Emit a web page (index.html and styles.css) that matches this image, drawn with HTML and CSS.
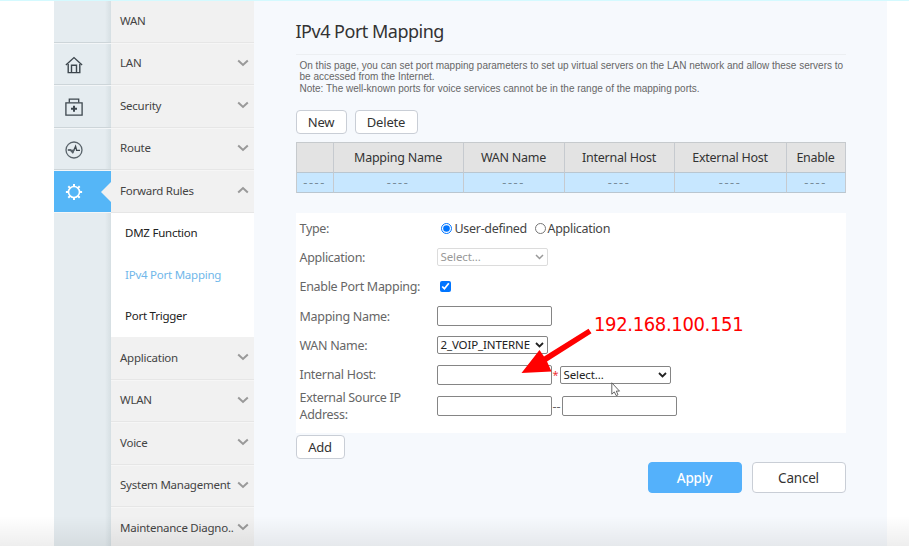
FILE: index.html
```html
<!DOCTYPE html>
<html lang="en">
<head>
<meta charset="utf-8">
<title>IPv4 Port Mapping</title>
<link rel="stylesheet" href="styles.css">
</head>
<body>
<svg class="defs" width="0" height="0"><symbol id="chev" viewBox="0 0 12 8"><path d="M1.2 1.5 6 6 10.8 1.5" fill="none" stroke="currentColor" stroke-width="2"/></symbol></svg>
<div class="page">
  <nav class="rail">
    <div class="rail-item"></div>
    <div class="rail-item"><svg width="18" height="18" viewBox="0 0 18 18" fill="none" stroke="#3d464d" stroke-width="1.4"><path d="M.9 9 9 1.6 17.1 9"/><path d="M3.2 8V16.6H14.8V8M6.5 16.5V9.2H11.5V16.5"/></svg></div>
    <div class="rail-item"><svg width="18" height="18" viewBox="0 0 18 18" fill="none" stroke="#3d464d" stroke-width="1.3"><path d="M.9 4.8H17.1V17.1H.9Z"/><path d="M4.3 4.6V1.2H13.7V4.6"/><path d="M9 7.8V13.8M6 10.8H12" stroke-width="2"/></svg></div>
    <div class="rail-item"><svg width="18" height="18" viewBox="0 0 18 18" fill="none" stroke="#59636a" stroke-width="1.3"><circle cx="9" cy="9" r="8"/><path d="M2.8 9H5.5L7.8 11.6 10.6 5.3 11.6 9.3H15" stroke="#3d464d"/><path d="M5.5 9.2 7.7 11.5 8.8 9.3Z" fill="#3d464d"/></svg></div>
    <div class="rail-item active"><svg width="18" height="18" viewBox="0 0 18 18" fill="none" stroke="#fff"><circle cx="9" cy="9" r="5.5" stroke-width="1.6"/><path d="M9 3.2V.9M9 14.8V17.1M3.2 9H.9M14.8 9H17.1M4.9 4.9 3.3 3.3M13.1 4.9 14.7 3.3M4.9 13.1 3.3 14.7M13.1 13.1 14.7 14.7" stroke-width="2"/></svg></div>
  </nav>
  <nav class="menu">
    <div class="menu-item">WAN</div>
    <div class="menu-item">LAN<svg class="chev"><use href="#chev"/></svg></div>
    <div class="menu-item">Security<svg class="chev"><use href="#chev"/></svg></div>
    <div class="menu-item">Route<svg class="chev"><use href="#chev"/></svg></div>
    <div class="menu-item">Forward Rules<svg class="chev up"><use href="#chev"/></svg></div>
    <div class="submenu">
      <div class="sub-item">DMZ Function</div>
      <div class="sub-item current">IPv4 Port Mapping</div>
      <div class="sub-item">Port Trigger</div>
    </div>
    <div class="menu-item">Application<svg class="chev"><use href="#chev"/></svg></div>
    <div class="menu-item">WLAN<svg class="chev"><use href="#chev"/></svg></div>
    <div class="menu-item">Voice<svg class="chev"><use href="#chev"/></svg></div>
    <div class="menu-item">System Management<svg class="chev"><use href="#chev"/></svg></div>
    <div class="menu-item">Maintenance Diagno..<svg class="chev"><use href="#chev"/></svg></div>
  </nav>
  <main class="content">
    <h1>IPv4 Port Mapping</h1>
    <div class="intro">On this page, you can set port mapping parameters to set up virtual servers on the LAN network and allow these servers to<br>be accessed from the Internet.<br>Note: The well-known ports for voice services cannot be in the range of the mapping ports.</div>
    <div class="tools"><button class="btn new">New</button><button class="btn delete">Delete</button></div>
    <div class="table">
      <div class="th"></div><div class="th">Mapping Name</div><div class="th">WAN Name</div><div class="th">Internal Host</div><div class="th">External Host</div><div class="th">Enable</div>
      <div class="td">----</div><div class="td">----</div><div class="td">----</div><div class="td">----</div><div class="td">----</div><div class="td">----</div>
    </div>
    <form class="form">
      <div class="row"><span class="label">Type:</span><input type="radio" name="t" checked><span class="opt first">User-defined</span><input type="radio" name="t"><span class="opt">Application</span></div>
      <div class="row"><span class="label">Application:</span><span class="select disabled">Select...<svg width="9" height="6" viewBox="0 0 9 6"><path d="M1 1 4.5 4.5 8 1" fill="none" stroke="currentColor" stroke-width="1.5"/></svg></span></div>
      <div class="row"><span class="label">Enable Port Mapping:</span><input type="checkbox" checked></div>
      <div class="row"><span class="label">Mapping Name:</span><input class="text" type="text"></div>
      <div class="row"><span class="label">WAN Name:</span><span class="select">2_VOIP_INTERNE<svg width="9" height="6" viewBox="0 0 9 6"><path d="M1 1 4.5 4.5 8 1" fill="none" stroke="currentColor" stroke-width="1.8"/></svg></span></div>
      <div class="row"><span class="label">Internal Host:</span><input class="text" type="text"><span class="star">*</span><span class="select">Select...<svg width="9" height="6" viewBox="0 0 9 6"><path d="M1 1 4.5 4.5 8 1" fill="none" stroke="currentColor" stroke-width="1.8"/></svg></span></div>
      <div class="row tall"><span class="label">External Source IP<br>Address:</span><input class="text" type="text"><span class="dash">--</span><input class="text" type="text"></div>
    </form>
    <button class="btn add">Add</button>
    <div class="actions"><button class="btn apply">Apply</button><button class="btn cancel">Cancel</button></div>
  </main>
</div>
<div class="note">192.168.100.151</div>
<svg class="overlay" width="909" height="546" viewBox="0 0 909 546"><path d="M521.5 373 539.5 350 544 356.5 588.5 328.8 591.5 333.3 547 361.5 551.5 371.5Z" fill="#f00"/><path d="M611.8 382.8V394.2L614.3 391.9 616.2 395.6 618 394.8 616.3 391.1H619.5Z" fill="#fff" stroke="#555" stroke-width=".9"/></svg>
<div class="topline"></div>
<div class="shade"></div>
</body>
</html>
```
FILE: styles.css
```css
* { box-sizing: border-box; }
body { margin: 0; height: 546px; overflow: hidden; background: #fff; font-family: "Noto Sans", "Open Sans", sans-serif; color: #333; }
.defs { position: absolute; }
.page { display: flex; width: 833px; margin-left: 54px; height: 546px; overflow: hidden; }
.rail { width: 57px; flex: none; background: linear-gradient(90deg, #e5ecf0 0 51px, #d6dfe3 57px); }
.rail-item { height: 42.5px; border-bottom: 1px solid #cdd5d9; box-shadow: 0 1px #f3f6f8; padding: 13px 0 0 11px; }
.rail-item svg { display: block; }
.rail-item.active { height: 41px; margin-top: 1px; background: #55b6f7; border: 0; padding-top: 12px; display: flex; }
.rail-item.active::after { content: ""; margin: -1px 0 0 auto; width: 10px; height: 20px; background: #f1f1f1; clip-path: polygon(0 50%, 100% 0, 100% 100%); }
.menu { width: 143px; flex: none; background: #f1f1f1; font-size: 11.5px; letter-spacing: -.24px; color: #444; }
.menu-item { height: 42.5px; border-bottom: 1px solid #e6e6e6; box-shadow: 0 1px #f6f6f6; padding: 0 5px 1px 9px; display: flex; align-items: center; justify-content: space-between; white-space: nowrap; }
.chev { width: 12px; height: 8px; flex: none; color: #999; }
.up { transform: rotate(180deg); }
.submenu { background: #fff; height: 124.5px; }
.sub-item { height: 41.6px; padding: 0 0 1px 14px; display: flex; align-items: center; color: #222; }
.current { color: #70b7ea; }
.content { flex: 1; padding: 19px 41.5px 0 41.5px; background: #f6f9fd; }
h1 { margin: 0; height: 36px; line-height: 25px; font-size: 18px; font-weight: 400; letter-spacing: -.5px; border-bottom: 1px solid #eceff2; }
.intro { padding: 5px 0 0 4px; height: 55px; font: 10px/11.4px "Liberation Sans", Arial, sans-serif; color: #666; white-space: nowrap; letter-spacing: 0; }
.btn { font-family: inherit; font-size: 13px; letter-spacing: -.2px; padding: 0; color: #333; background: #fff; border: 1px solid #c9ced6; border-radius: 4px; display: block; }
.tools { display: flex; gap: 8px; height: 32px; }
.new { width: 51px; height: 24px; }
.delete { width: 63px; height: 24px; }
.table { display: grid; grid-template-columns: 37px 130px 101px 110px 112px 59px; grid-template-rows: 30px 20px; width: 550px; border: 1px solid #c6cacd; border-right: 0; border-bottom: 0; font-size: 12.5px; letter-spacing: -.25px; }
.th, .td { display: flex; align-items: center; justify-content: center; border-right: 1px solid #c6cacf; border-bottom: 1px solid #b9c6d0; }
.th { background: #e3e3e3; }
.td { background: #c7e7ff; color: #778c9a; letter-spacing: 1.6px; }
.form { width: 550px; margin: 20px 0 0; height: 220px; background: #fff; font-size: 12.5px; letter-spacing: -.3px; padding: .5px 0 0 4px; color: #666; }
.row { height: 29.3px; display: flex; align-items: center; white-space: nowrap; }
.label { width: 137px; flex: none; }
.opt { color: #444; }
.first { width: 76px; }
input[type=radio] { width: 11px; height: 11px; margin: 0 3px 0 4px; }
input[type=radio] ~ input[type=radio] { margin-right: 2px; }
input[type=checkbox] { width: 11px; height: 11px; margin: 0 0 0 3px; }
.text { width: 115px; height: 20px; border: 1px solid #858585; border-radius: 2px; padding: 0; background: #fff; }
.select { display: flex; align-items: center; justify-content: space-between; width: 111px; height: 18px; border: 1px solid #858585; border-radius: 2px; background: #fff; font-size: 11.5px; line-height: 16px; letter-spacing: -.12px; padding: 0 3px; color: #222; }
.disabled { border-color: #dcdcdc; color: #999; }
.star { width: 8px; color: #e33; font-size: 11px; text-align: center; }
.dash { width: 10px; text-align: center; letter-spacing: 0; }
.tall { height: 34px; line-height: 17px; }
.add { width: 49px; height: 24px; margin-top: 2px; }
.actions { display: flex; justify-content: flex-end; gap: 10px; margin-top: 3px; }
.apply, .cancel { width: 94px; height: 31px; font-size: 13.5px; }
.apply { background: #54b1fb; border-color: #54b1fb; color: #fff; font-weight: 500; }
.note { position: absolute; left: 594px; top: 312px; font: 20px/24px "DejaVu Sans Condensed", "DejaVu Sans", sans-serif; font-stretch: condensed; letter-spacing: -.35px; color: #f00; }
.overlay { position: absolute; left: 0; top: 0; }
.topline { position: absolute; left: 0; top: 0; width: 909px; height: 1px; background: #d4faff; }
.shade { position: absolute; left: 0; top: 516px; width: 909px; height: 30px; background: linear-gradient(rgba(0,0,0,0), rgba(0,0,0,.065)); }
```
